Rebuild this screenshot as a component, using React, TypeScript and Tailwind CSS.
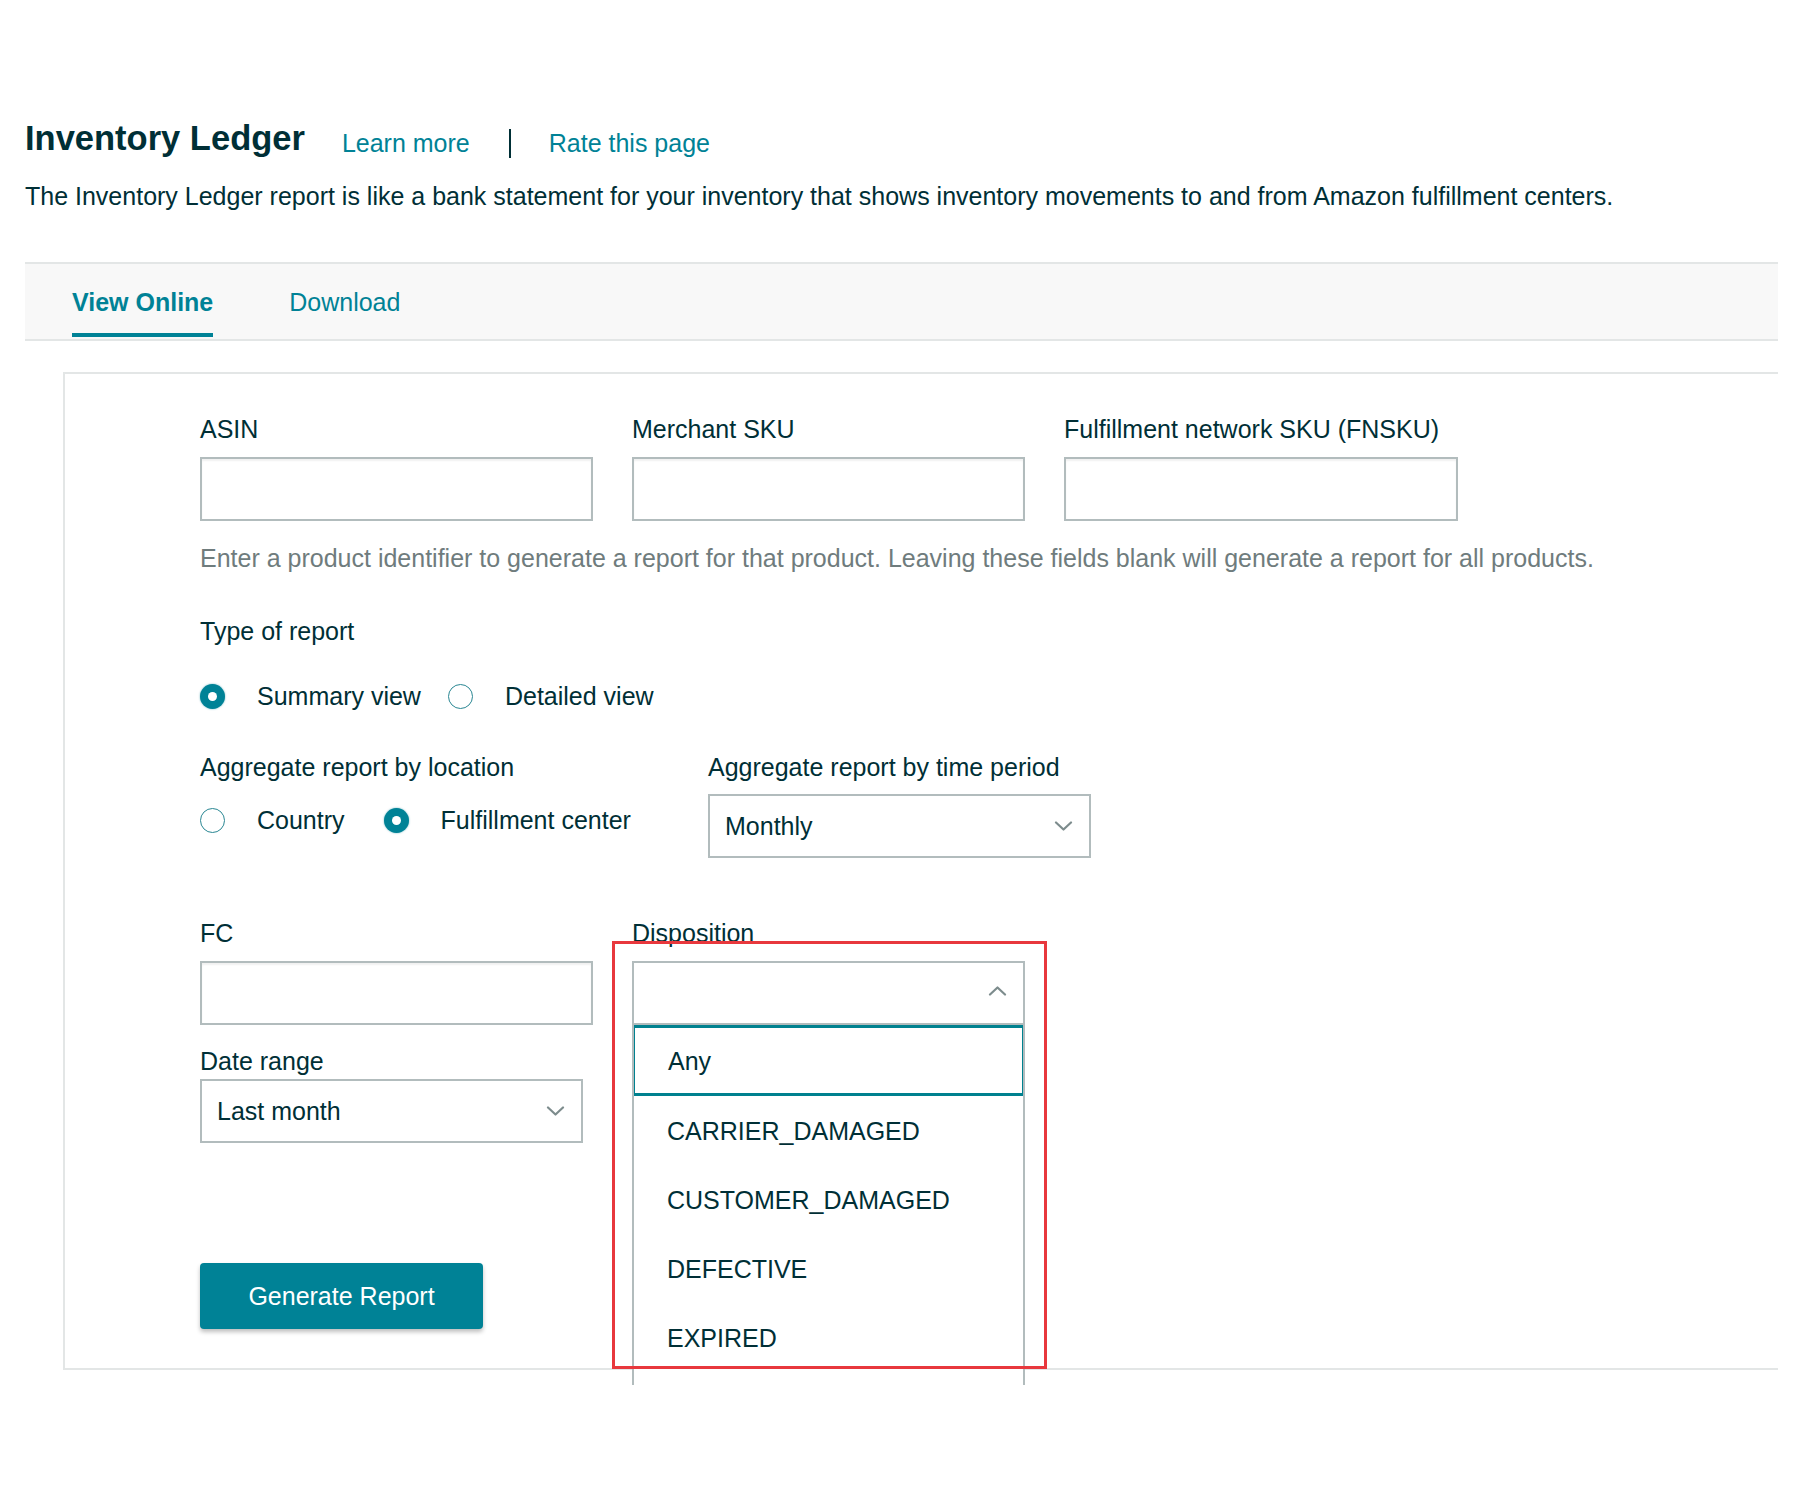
import React from 'react'

const font = { fontFamily: '"Liberation Sans", Arial, sans-serif' }

function Radio({ checked }: { checked?: boolean }) {
  if (checked) {
    return (
      <span className="w-[25px] h-[25px] rounded-full bg-[#008296] flex items-center justify-center shadow-[0_0_2px_rgba(0,130,150,0.6)] shrink-0">
        <span className="w-[9px] h-[9px] rounded-full bg-white" />
      </span>
    )
  }
  return <span className="w-[25px] h-[25px] rounded-full border-[1.5px] border-[#2a8793] bg-white shrink-0" />
}

function Chevron({ up }: { up?: boolean }) {
  return (
    <svg width="19" height="11" viewBox="0 0 19 11" fill="none" className={up ? '-translate-y-[3px]' : ''}>
      <path
        d={up ? 'M2 9.5L9.5 2.5L17 9.5' : 'M2 1.5L9.5 8.5L17 1.5'}
        stroke="#7d8c8d"
        strokeWidth="2.2"
        strokeLinecap="round"
        strokeLinejoin="round"
      />
    </svg>
  )
}

function TextInput({ className = '' }: { className?: string }) {
  return (
    <div
      className={`h-[64px] border-2 border-[#b2bcbd] bg-white shadow-[inset_0_2px_2px_rgba(0,0,0,0.06)] ${className}`}
    />
  )
}

function Select({ value, up, className = '' }: { value?: string; up?: boolean; className?: string }) {
  return (
    <div
      className={`h-[64px] border-2 border-[#b2bcbd] bg-white flex items-center justify-between pl-[15px] pr-[16px] ${className}`}
    >
      <span className="text-[25px] text-[#002f36]">{value}</span>
      <Chevron up={up} />
    </div>
  )
}

const options = ['CARRIER_DAMAGED', 'CUSTOMER_DAMAGED', 'DEFECTIVE', 'EXPIRED']

export default function App() {
  return (
    <div className="w-[1800px] h-[1500px] bg-white overflow-hidden text-[#002f36]" style={font}>
      <div className="pl-[25px] pt-[118px]">
        {/* Header */}
        <div className="flex items-baseline h-[40px]">
          <h1 className="text-[34.5px] font-bold leading-[40px]">Inventory Ledger</h1>
          <a className="ml-[37px] text-[25px] leading-[30px] text-[#008296] translate-y-[2px]">Learn more</a>
          <span className="ml-[39px] w-[2px] h-[29px] bg-[#002f36] self-center translate-y-[5px]" />
          <a className="ml-[38px] text-[25px] leading-[30px] text-[#008296] translate-y-[2px]">Rate this page</a>
        </div>
        <p className="mt-[23px] text-[25px] leading-[30px]">
          The Inventory Ledger report is like a bank statement for your inventory that shows inventory movements to and
          from Amazon fulfillment centers.
        </p>

        {/* Tabs */}
        <div className="mt-[51px] w-[1753px] h-[79px] bg-[#f8f8f8] border-y-2 border-[#e3e6e6] flex items-start pl-[47px] gap-[76px]">
          <div className="pt-[23px] flex flex-col">
            <span className="text-[25px] leading-[30px] font-bold text-[#008296]">View Online</span>
            <span className="mt-[16px] h-[4px] bg-[#008296]" />
          </div>
          <div className="pt-[23px]">
            <span className="text-[25px] leading-[30px] text-[#008296]">Download</span>
          </div>
        </div>

        {/* Form panel */}
        <div className="mt-[31px] ml-[38px] w-[1715px] border-l-2 border-t-2 border-b-2 border-[#e3e6e6] pl-[135px] pt-[41px] pb-[39px] text-[25px] leading-[28px]">
          <div className="flex gap-[39px]">
            <div className="w-[393px]">
              <div>ASIN</div>
              <TextInput className="mt-[14px]" />
            </div>
            <div className="w-[393px]">
              <div>Merchant SKU</div>
              <TextInput className="mt-[14px]" />
            </div>
            <div className="w-[394px]">
              <div>Fulfillment network SKU (FNSKU)</div>
              <TextInput className="mt-[14px]" />
            </div>
          </div>
          <p className="mt-[23px] text-[#6f7c7d]">
            Enter a product identifier to generate a report for that product. Leaving these fields blank will generate a
            report for all products.
          </p>

          <div className="mt-[45px]">Type of report</div>
          <div className="mt-[37px] h-[28px] flex items-center">
            <Radio checked />
            <span className="ml-[32px]">Summary view</span>
            <span className="ml-[27px] flex items-center">
              <Radio />
            </span>
            <span className="ml-[32px]">Detailed view</span>
          </div>

          <div className="mt-[43px] flex items-start">
            <div className="w-[508px]">
              <div>Aggregate report by location</div>
              <div className="mt-[25px] h-[28px] flex items-center">
                <Radio />
                <span className="ml-[32px]">Country</span>
                <span className="ml-[39px] flex items-center">
                  <Radio checked />
                </span>
                <span className="ml-[32px]">Fulfillment center</span>
              </div>
            </div>
            <div>
              <div>Aggregate report by time period</div>
              <Select value="Monthly" className="mt-[13px] w-[383px]" />
            </div>
          </div>

          <div className="mt-[61px] flex gap-[39px] items-start">
            <div className="w-[393px]">
              <div>FC</div>
              <TextInput className="mt-[14px]" />
              <div className="mt-[22px]">Date range</div>
              <Select value="Last month" className="mt-[4px] w-[383px]" />
              <button className="mt-[120px] w-[283px] h-[66px] rounded-[4px] bg-[#008296] text-white text-[25px] shadow-[0_3px_4px_rgba(0,0,0,0.25)]">
                Generate Report
              </button>
            </div>
            <div className="w-[393px] relative">
              <div>Disposition</div>
              <div className="relative mt-[14px]">
                <Select up />
                {/* Open dropdown list */}
                <div className="absolute left-0 top-full w-[393px] h-[360px] bg-white border-x-2 border-[#b2bcbd] overflow-hidden z-10">
                  <div className="-mx-[2px] h-[71px] border-[3px] border-[#00818f] flex items-center pl-[33px]">Any</div>
                  {options.map((o) => (
                    <div key={o} className="h-[69px] flex items-center pl-[33px]">
                      {o}
                    </div>
                  ))}
                </div>
              </div>
              {/* Annotation box */}
              <div className="absolute left-[-20px] top-[22px] w-[435px] h-[428px] border-[3px] border-[#e8383d] z-20 pointer-events-none" />
            </div>
          </div>
        </div>
      </div>
    </div>
  )
}
